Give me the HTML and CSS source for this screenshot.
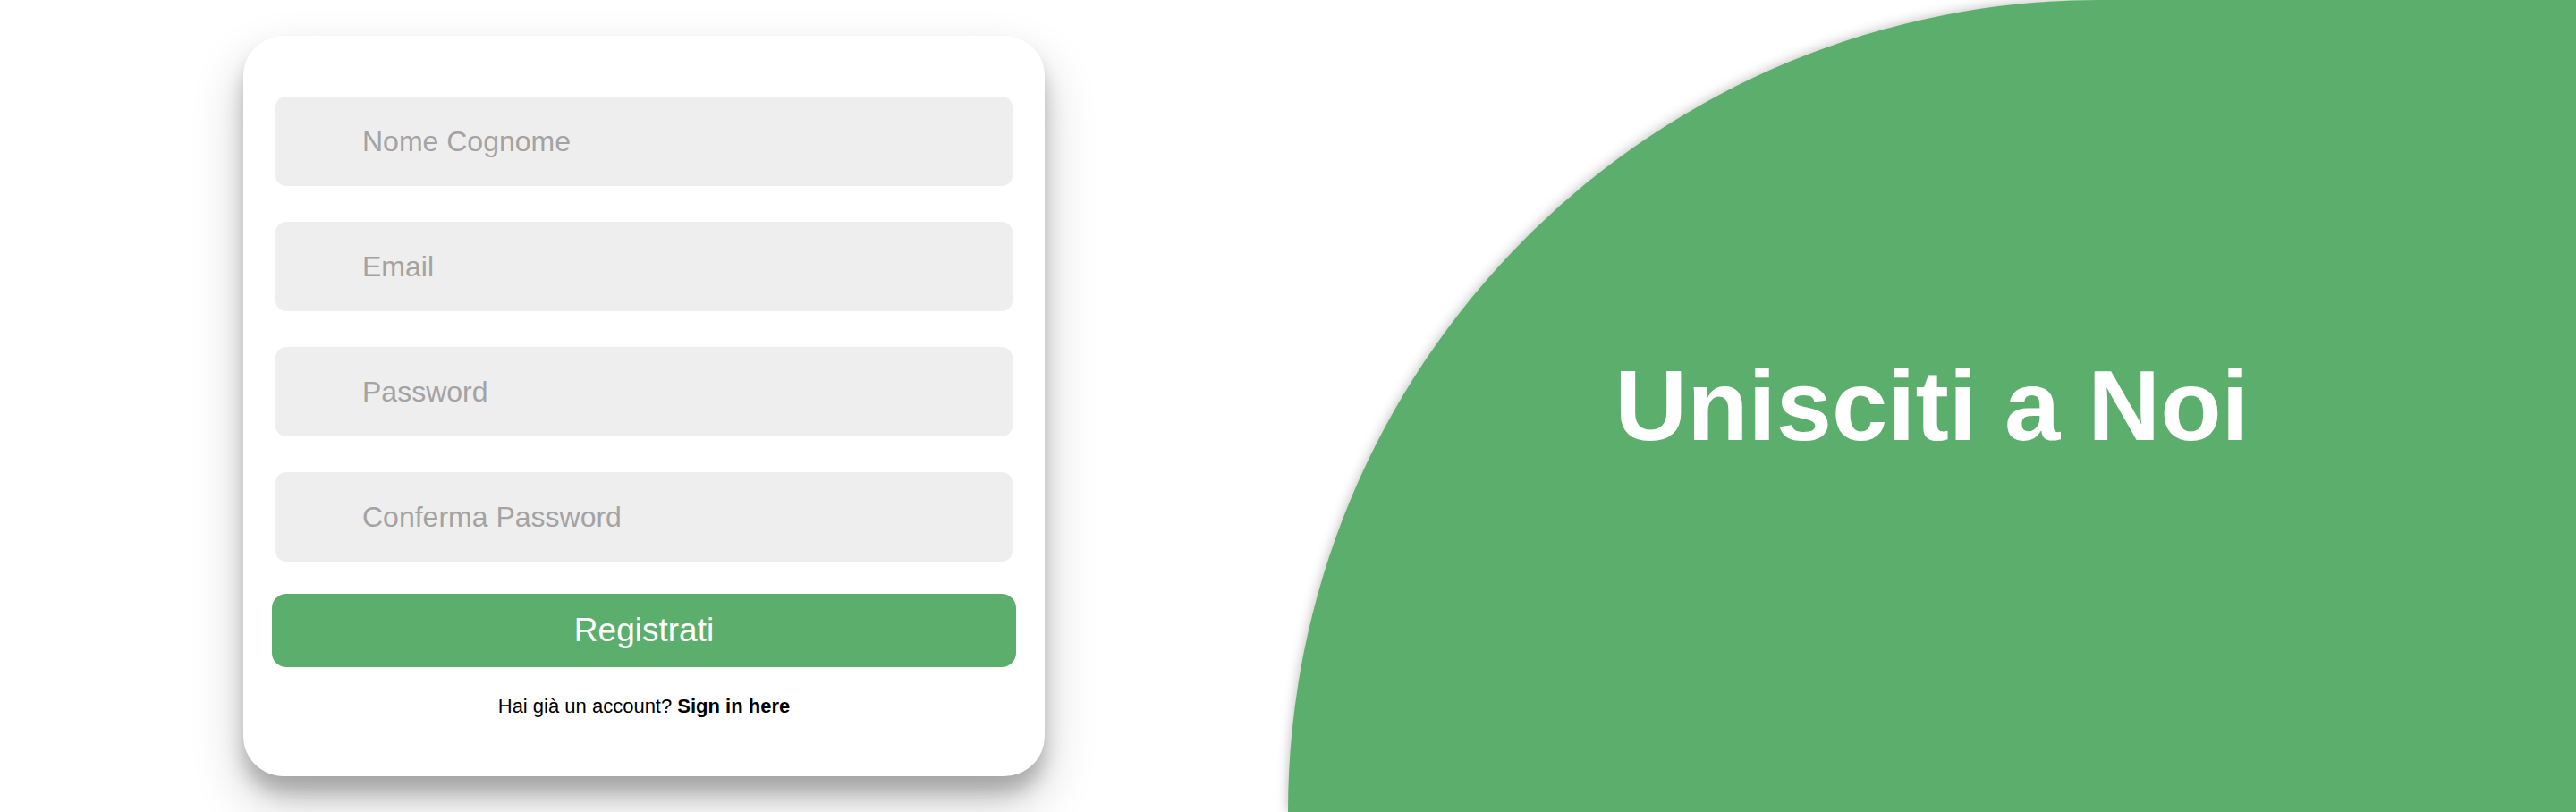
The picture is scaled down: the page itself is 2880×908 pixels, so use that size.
FILE: index.html
```html
<!DOCTYPE html>
<html lang="it">
<head>
<meta charset="utf-8">
<title>Registrati</title>
<link rel="stylesheet" href="styles.css">
</head>
<body>
<div class="page">
  <section class="left">
    <form class="card">
      <input class="field" type="text" placeholder="Nome Cognome">
      <input class="field" type="email" placeholder="Email">
      <input class="field" type="password" placeholder="Password">
      <input class="field" type="password" placeholder="Conferma Password">
      <button class="btn" type="button">Registrati</button>
      <p class="switch">Hai già un account? <a href="#" class="switch-link">Sign in here</a></p>
    </form>
  </section>
  <section class="right">
    <h1 class="title">Unisciti a Noi</h1>
  </section>
</div>
</body>
</html>
```

FILE: styles.css
```css
* { box-sizing: border-box; }

html, body {
  margin: 0;
  padding: 0;
  background: #ffffff;
  font-family: "Liberation Sans", Arial, Helvetica, sans-serif;
}

.page {
  display: grid;
  grid-template-columns: 1fr 1fr;
  height: 908px;
  overflow: hidden;
}

.left {
  display: flex;
  align-items: center;
  justify-content: center;
}

.card {
  width: 896px;
  background: #ffffff;
  border-radius: 45px;
  padding: 68px 32px 65px;
  display: flex;
  flex-direction: column;
  box-shadow: 0 28px 56px rgba(0, 0, 0, 0.22), 0 18px 20px rgba(0, 0, 0, 0.2);
}

.field {
  display: block;
  height: 100px;
  margin: 0 4px 40px;
  padding: 0 24px 0 97px;
  border: none;
  border-radius: 12px;
  background: #eeeeee;
  font-family: inherit;
  font-size: 32px;
  color: #333333;
  outline: none;
}
.field:last-of-type { margin-bottom: 0; }
.field::placeholder { color: #a3a3a3; }

.btn {
  margin-top: 36px;
  height: 82px;
  border: none;
  border-radius: 16px;
  background: #5cae6c;
  color: #ffffff;
  font-family: inherit;
  font-size: 37px;
  cursor: pointer;
}

.switch {
  margin: 31px 0 0;
  font-size: 22px;
  line-height: 26px;
  text-align: center;
  color: #000000;
}
.switch-link {
  color: #000000;
  font-weight: bold;
  text-decoration: none;
}

.right {
  display: flex;
  align-items: center;
  justify-content: center;
  background: #5cae6c;
  border-top-left-radius: 908px;
  box-shadow: 0 0 14px rgba(0, 0, 0, 0.28);
}

.title {
  margin: 0;
  color: #ffffff;
  font-size: 112px;
  font-weight: bold;
  line-height: 1;
}
```
